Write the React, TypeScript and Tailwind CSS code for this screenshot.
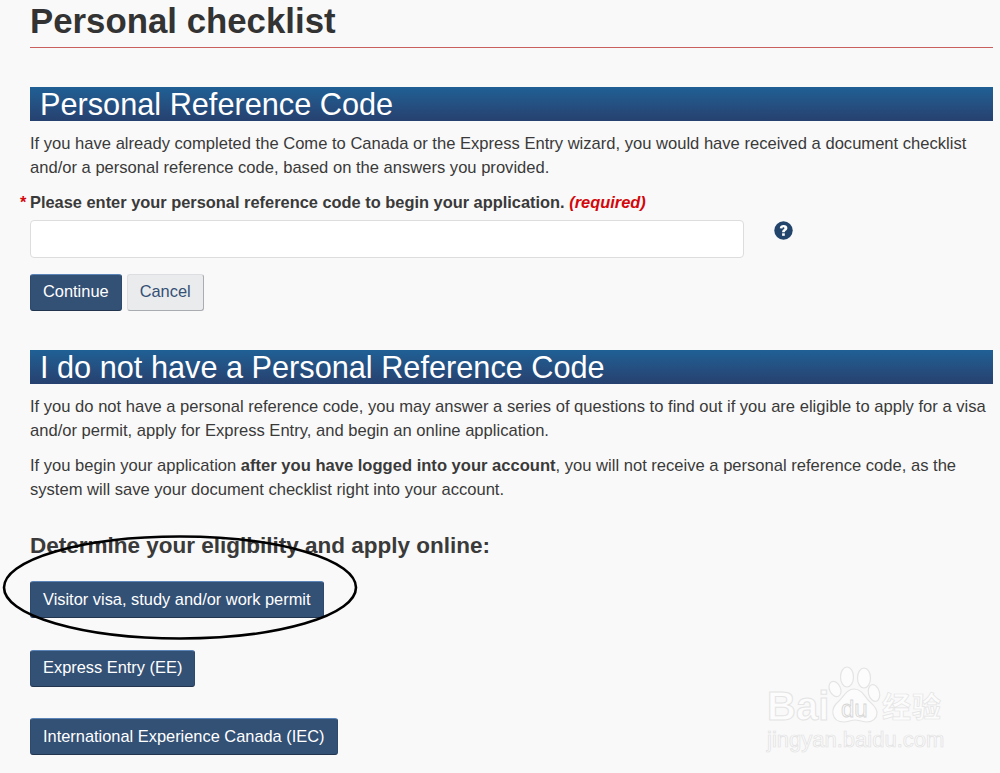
import React from 'react'

const btn =
  'block h-[37px] rounded-[3px] border border-[#2c4a6e] border-t-[#5b84b8] border-b-[#22354f] bg-[#335075] px-[12px] pb-[2px] text-[16.4px] leading-[24px] text-white'

const SectionBar = ({ title }: { title: string }) => (
  <h2 className="h-[34px] bg-gradient-to-b from-[#1f6095] to-[#26416f] pl-[10px] text-[30.7px] leading-[36px] font-normal text-white">
    {title}
  </h2>
)

const Watermark = () => (
  <div className="absolute left-[766px] top-[664px] h-[90px] w-[190px] select-none">
    <svg className="absolute left-[60px] top-0" width="60" height="62" viewBox="0 0 60 62" fill="#fcfcfc" stroke="#e4e4e4" strokeWidth="1.2">
      <ellipse cx="21" cy="13" rx="6.5" ry="10" />
      <ellipse cx="38" cy="14" rx="6.5" ry="10" />
      <ellipse cx="9" cy="25" rx="5.5" ry="8" transform="rotate(-25 9 25)" />
      <ellipse cx="48" cy="29" rx="5.5" ry="8.5" transform="rotate(-15 48 29)" />
      <path d="M28 25c-7 0-10 7-15 12-5 4-7 8-6 13 1 5 5 8 11 8 4 0 7-2 11-2s8 2 12 2c6 0 10-4 10-9 0-6-5-9-9-13-4-5-7-11-14-11z" />
    </svg>
    <span className="absolute left-[1px] top-[20px] font-['Liberation_Sans',sans-serif] text-[40px] leading-[44px] font-bold text-[#fcfcfc] [-webkit-text-stroke:1px_#e4e4e4]">
      Bai
    </span>
    <span className="absolute left-[75px] top-[33px] font-['Liberation_Sans',sans-serif] text-[24px] leading-[24px] text-[#fcfcfc] [-webkit-text-stroke:0.8px_#d4d4d4]">
      du
    </span>
    <span className="absolute left-[116px] top-[24px] font-['Noto_Sans_CJK_SC',sans-serif] text-[29px] leading-[34px] font-bold tracking-[1px] text-[#fcfcfc] [-webkit-text-stroke:0.7px_#e4e4e4]">
      经验
    </span>
    <span className="absolute left-[1px] top-[63px] font-['Liberation_Sans',sans-serif] text-[22px] leading-[26px] text-[#fcfcfc] [-webkit-text-stroke:0.7px_#e2e2e2]">
      jingyan.baidu.com
    </span>
  </div>
)

export default function App() {
  return (
    <div className="relative h-[773px] w-[1000px] overflow-hidden bg-[#f9f9f9] pl-[30px] pr-[7px] font-['Liberation_Sans',Arial,sans-serif] text-[16px] text-[#3a3a3a]">
      <h1 className="h-[47px] text-[34.8px] leading-[41px] font-bold text-[#333]">Personal checklist</h1>
      <div className="h-px bg-[#c9605e]" />

      <div className="pt-[39px]">
        <SectionBar title="Personal Reference Code" />
        <p className="mt-[11px] text-[16.57px] leading-[24px]">
          If you have already completed the Come to Canada or the Express Entry wizard, you would have received a document checklist
          <br />
          and/or a personal reference code, based on the answers you provided.
        </p>

        <div className="relative mt-[10px] text-[16.4px] leading-[24px] font-bold">
          <span className="absolute left-[-10px] top-0 text-[#d3080c]">*</span>
          Please enter your personal reference code to begin your application.{' '}
          <em className="text-[#d3080c]">(required)</em>
        </div>

        <div className="mt-[6px] flex items-start">
          <input className="h-[38px] w-[714px] rounded-[4px] border border-[#ddd] bg-white" aria-label="Personal reference code" />
          <svg className="ml-[30px] mt-[1px]" width="19" height="19" viewBox="0 0 19 19">
            <circle cx="9.5" cy="9.5" r="9.2" fill="#24456b" />
            <path d="M5.8 7.3c.1-2.2 1.6-3.3 3.8-3.3 2.2 0 3.8 1.2 3.8 3 0 2.500-2.600 2.500-2.600 4.300H8.100c0-2.900 2.300-2.900 2.300-4.100 0-.6-.3-.9-.9-.9-.7 0-1 .4-1.100 1.100z" fill="#fff" />
            <rect x="8.100" y="12.300" width="2.700" height="2.500" fill="#fff" />
          </svg>
        </div>

        <div className="mt-[16px] flex gap-[5px]">
          <button className={btn + ' pb-[4px]'}>Continue</button>
          <button className="block h-[37px] rounded-[3px] border border-[#dcdee1] border-r-[#a9acb0] border-b-[#a9acb0] bg-[#eaebed] px-[12px] pb-[4px] text-[16.4px] leading-[24px] text-[#335075]">
            Cancel
          </button>
        </div>
      </div>

      <div className="pt-[39px]">
        <SectionBar title="I do not have a Personal Reference Code" />
        <p className="mt-[11px] text-[16.57px] leading-[24px]">
          If you do not have a personal reference code, you may answer a series of questions to find out if you are eligible to apply for a visa
          <br />
          and/or permit, apply for Express Entry, and begin an online application.
        </p>
        <p className="mt-[11px] text-[16.57px] leading-[24px]">
          If you begin your application <b>after you have logged into your account</b>, you will not receive a personal reference code, as the
          <br />
          system will save your document checklist right into your account.
        </p>
        <h3 className="mt-[30px] text-[22.5px] leading-[28px] font-bold">Determine your eligibility and apply online:</h3>
        <div className="mt-[21px] flex flex-col items-start gap-[31.5px]">
          <button className={btn}>Visitor visa, study and/or work permit</button>
          <button className={btn}>Express Entry (EE)</button>
          <button className={btn}>International Experience Canada (IEC)</button>
        </div>
      </div>

      <svg className="absolute left-0 top-[530px]" width="362" height="114" viewBox="0 0 362 114" fill="none">
        <ellipse cx="180" cy="57.5" rx="176" ry="51" stroke="#000" strokeWidth="2.6" />
      </svg>

      <Watermark />
    </div>
  )
}
